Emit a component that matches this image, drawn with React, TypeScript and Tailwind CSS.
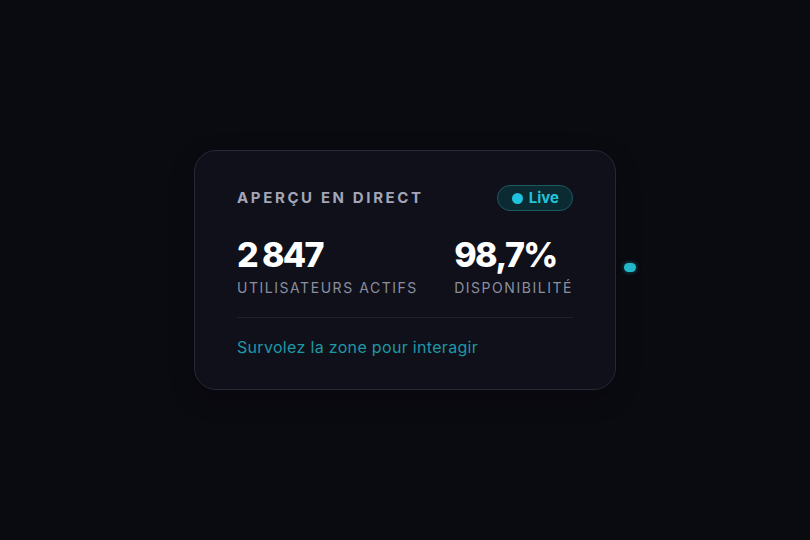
import React from "react";

export default function App() {
  return (
    <div
      className="relative flex h-[540px] w-[810px] items-center justify-center bg-[#0a0a11]"
      style={{ fontFamily: "Inter, 'Noto Sans', sans-serif" }}
    >
      {/* card */}
      <div className="w-[422px] rounded-[22px] border border-[#262836] bg-[#0f1019] px-[42px] pt-[34px] pb-[31px] shadow-[0_8px_24px_rgba(0,0,0,0.25)]">
        <div className="flex items-center justify-between">
          <span className="text-[15px] font-bold uppercase tracking-[0.175em] text-[#a3a6b8]">
            Aperçu en direct
          </span>
          <span className="flex h-[26px] items-center gap-[6px] rounded-full border border-[#1c5a63] bg-[#0c2a31] pl-[14px] pr-[13px] text-[15px] font-bold text-[#22c3dc]">
            <span className="h-[11px] w-[11px] rounded-full bg-[#1ec3e0]" />
            Live
          </span>
        </div>

        <div className="mt-[27px] flex justify-between">
          <div>
            <div className="text-[34px] font-extrabold leading-none tracking-[-0.05em] text-white">
              2<span className="ml-[5px]">847</span>
            </div>
            <div className="mt-[6px] text-[14px] leading-5 tracking-[0.11em] text-[#8b8e9f] uppercase">
              Utilisateurs actifs
            </div>
          </div>
          <div>
            <div className="text-[34px] font-extrabold leading-none tracking-[-0.045em] text-white">98,7%</div>
            <div className="mt-[6px] text-[14px] leading-5 tracking-[0.11em] text-[#8b8e9f] uppercase">
              Disponibilité
            </div>
          </div>
        </div>

        <div className="mt-[19px] h-px bg-[#1f2130]" />

        <div className="mt-[18px] text-[16px] leading-[22px] tracking-[0.02em] text-[#1f98a6]">
          Survolez la zone pour interagir
        </div>
      </div>

      {/* cursor blob */}
      <div className="absolute left-[624px] top-[263px] h-[9px] w-[12px] rounded-full bg-[#22b8cc] shadow-[0_0_5px_rgba(34,184,204,0.5)]" />
    </div>
  );
}
